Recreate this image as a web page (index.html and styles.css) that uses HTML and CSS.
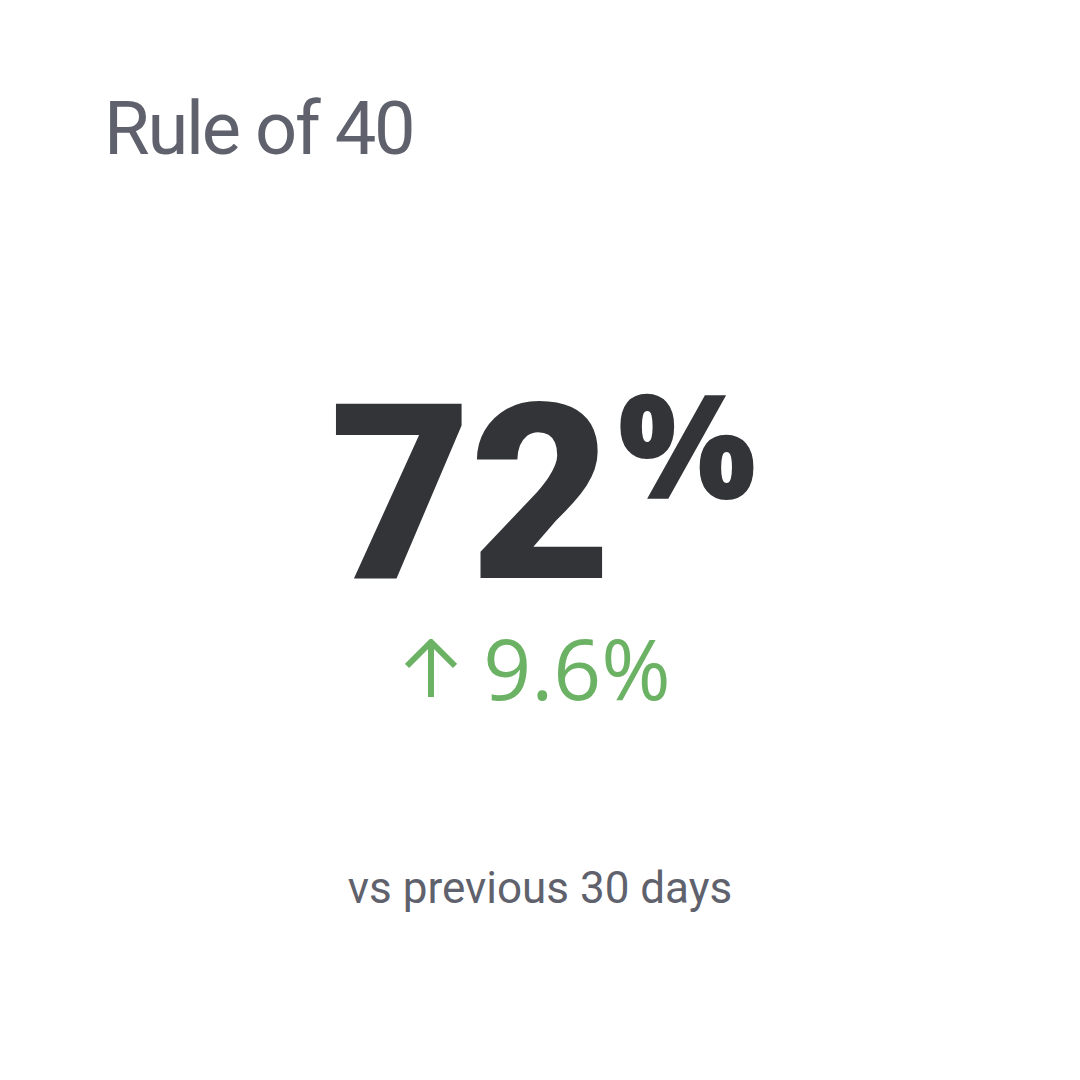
FILE: index.html
```html
<!DOCTYPE html>
<html lang="en">
<head>
<meta charset="utf-8">
<title>Rule of 40</title>
<link rel="stylesheet" href="styles.css">
</head>
<body>
<main class="card">
  <h1 class="title">Rule of 40</h1>
  <section class="metric">
    <div class="value">72<span class="pct">%</span></div>
    <div class="delta">
      <svg class="arrow" width="52" height="60" viewBox="0 0 52 60" aria-hidden="true">
        <path d="M26 3 V58 M2 27 L26 3 L50 27" fill="none" stroke="currentColor" stroke-width="6" stroke-linejoin="miter"/>
      </svg>
      <span class="delta-text">9.6%</span>
    </div>
    <div class="caption">vs previous 30 days</div>
  </section>
</main>
</body>
</html>
```
FILE: styles.css
```css
html, body {
  margin: 0;
  padding: 0;
  background: #ffffff;
}

.card {
  width: 1080px;
  height: 1080px;
  box-sizing: border-box;
  padding: 92px 0 0 104px;
  font-family: Roboto, "Liberation Sans", sans-serif;
  display: flex;
  flex-direction: column;
}

.title {
  margin: 0;
  font-size: 74px;
  line-height: 1;
  font-weight: 400;
  color: #5f626d;
  letter-spacing: -2.2px;
}

.metric {
  margin-left: -104px;
  width: 1080px;
  display: flex;
  flex-direction: column;
  align-items: center;
  margin-top: 211px;
}

.value {
  font-size: 245px;
  line-height: 0.96;
  font-weight: 900;
  color: #333438;
  letter-spacing: -2px;
  display: flex;
  align-items: flex-start;
  margin-left: 6px;
}

.pct {
  font-family: "Open Sans", Roboto, sans-serif;
  font-size: 146px;
  font-weight: 800;
  line-height: 1;
  margin-left: 8px;
  margin-top: -7px;
  letter-spacing: 0;
}

.delta {
  margin-top: 18px;
  display: flex;
  align-items: center;
  gap: 26px;
  color: #6cb264;
  margin-right: 4px;
}

.arrow {
  display: block;
  margin-top: 2px;
}

.delta-text {
  font-family: "Open Sans", Roboto, sans-serif;
  font-size: 84px;
  line-height: 0.9;
  font-weight: 400;
}

.caption {
  margin-top: 160px;
  font-size: 44px;
  line-height: 1;
  color: #5f626d;
}
```
